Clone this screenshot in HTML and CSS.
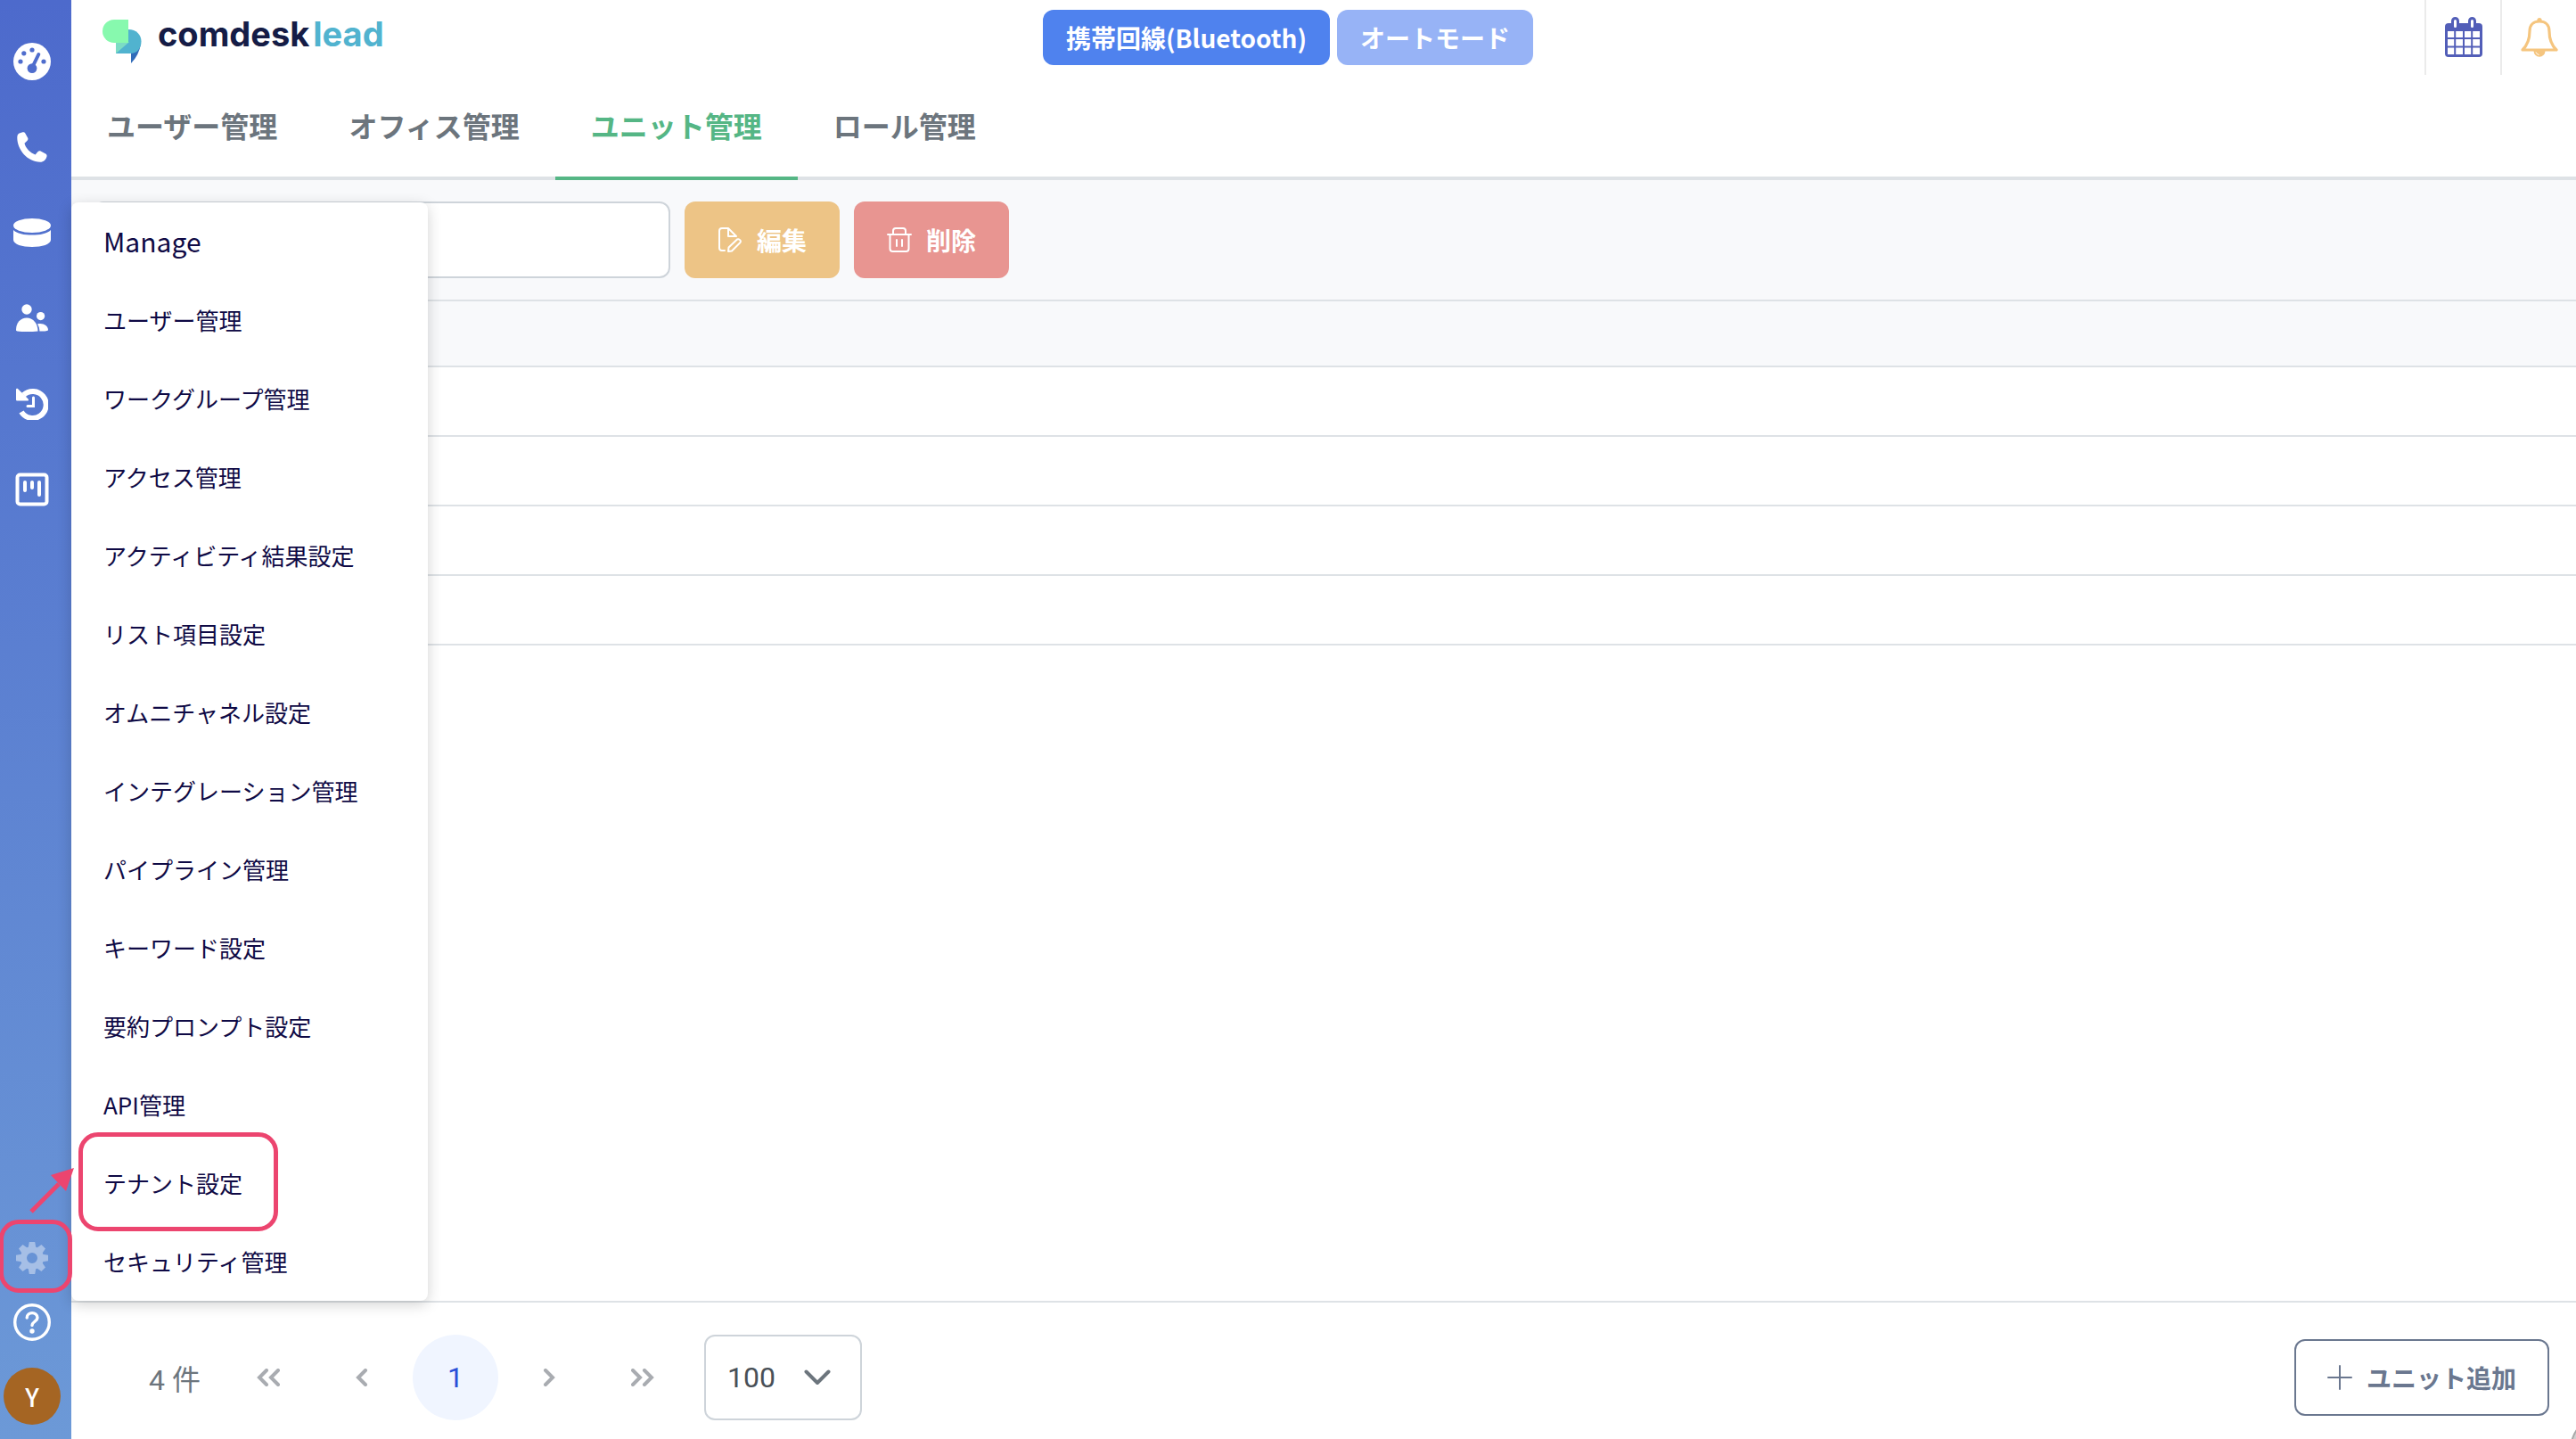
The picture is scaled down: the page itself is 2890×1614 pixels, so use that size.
FILE: index.html
```html
<!DOCTYPE html>
<html lang="ja">
<head>
  <meta charset="UTF-8">
  <meta name="viewport" content="width=device-width, initial-scale=1.0">
  <title>ユニット管理 - comdesk lead</title>
  <link rel="stylesheet" href="styles.css">
</head>
<body>
  <aside class="sidebar">
    <nav class="side-nav">
      <a href="#" class="side-link" aria-label="ダッシュボード">
        <svg width="42" height="42" viewBox="0 0 42 42">
          <circle cx="21" cy="21" r="21" fill="#fff"/>
          <g fill="#4f6dcd">
            <circle cx="8" cy="21" r="2.6"/>
            <circle cx="11.8" cy="11.8" r="2.6"/>
            <circle cx="21" cy="8" r="2.6"/>
            <circle cx="34" cy="21" r="2.6"/>
            <circle cx="21" cy="28.6" r="5.4"/>
          </g>
          <path d="M21.5 27L28.3 13" stroke="#4f6dcd" stroke-width="4" stroke-linecap="round"/>
        </svg>
      </a>
      <a href="#" class="side-link" aria-label="電話">
        <svg width="34" height="34" viewBox="0 0 34 34" fill="#fff">
          <path d="M2.6 1.5L6.4.3C7.6 0 8.8.5 9.3 1.6L12.2 6.8C12.700 7.8 12.4 8.9 11.6 9.7L8.5 12.8C9.6 17.8 15.2 24 20.6 25.4L23.6 22C24.3 21.2 25.6 21 26.6 21.5L32.2 24.4C33.3 25 33.8 26.2 33.5 27.4C32.6 31 30 33.7 26 33.7C12 33.7.3 20 .3 6.5C.3 4 1 2.2 2.6 1.5Z"/>
        </svg>
      </a>
      <a href="#" class="side-link" aria-label="データ">
        <svg width="42" height="32" viewBox="0 0 42 32" fill="#fff">
          <ellipse cx="21" cy="8" rx="21" ry="8"/>
          <path d="M0 13C4 17 12 18.600 21 18.600S38 17 42 13V24C42 29 32 32 21 32S0 29 0 24Z"/>
        </svg>
      </a>
      <a href="#" class="side-link" aria-label="顧客">
        <svg width="36" height="32" viewBox="0 0 36 32" fill="#fff">
          <circle cx="12" cy="6" r="5.700"/>
          <circle cx="27.600" cy="13.600" r="4.600"/>
          <path d="M0 29C0 21 5 15.400 12 15.400C19.500 15.400 24.500 22 24.500 30.600C17 31.300 7 31.300 1.500 30.500C.4 30.300 0 29.800 0 29Z"/>
          <path d="M24 22.500C30 20.800 36 24 36 29C36 30.400 33 30.600 26.400 30.600C26.400 27.500 25.600 25 24 22.500Z"/>
        </svg>
      </a>
      <a href="#" class="side-link" aria-label="履歴">
        <svg width="36" height="36" viewBox="0 0 36 36" fill="none">
          <path d="M8.500 8A15 15 0 1 1 6 27" stroke="#fff" stroke-width="6"/>
          <path d="M0 2C0 .8 1.400.4 2.200 1.200L13.600 12.500C14.400 13.400 14 14.600 12.800 14.600H1.500C.6 14.600 0 14 0 13.200Z" fill="#fff"/>
          <path d="M19.500 11V20.500H13" stroke="#fff" stroke-width="3" stroke-linecap="round"/>
        </svg>
      </a>
      <a href="#" class="side-link" aria-label="カンバン">
        <svg width="38" height="38" viewBox="0 0 38 38" fill="none" stroke="#fff" stroke-width="4" stroke-linecap="round">
          <rect x="2.500" y="2.500" width="33" height="33" rx="3"/>
          <path d="M11 11V20M19 11V17M27 11V25"/>
        </svg>
      </a>
    </nav>
    <div class="side-bottom">
      <button type="button" class="side-button" aria-label="設定">
        <svg width="36" height="36" viewBox="-18 -18 36 36">
          <defs><path id="tooth" d="M-3.200-18H3.200L4.600-10H-4.600Z"/></defs>
          <g fill="#a6bfe6">
            <use href="#tooth"/><use href="#tooth" transform="rotate(45)"/><use href="#tooth" transform="rotate(90)"/><use href="#tooth" transform="rotate(135)"/>
            <use href="#tooth" transform="rotate(180)"/><use href="#tooth" transform="rotate(225)"/><use href="#tooth" transform="rotate(270)"/><use href="#tooth" transform="rotate(315)"/>
          </g>
          <circle r="9.500" fill="none" stroke="#a6bfe6" stroke-width="7"/>
        </svg>
      </button>
      <button type="button" class="side-button" aria-label="ヘルプ">
        <svg width="42" height="42" viewBox="0 0 42 42" fill="none" stroke="#fff">
          <circle cx="21" cy="21" r="19.300" stroke-width="3.400"/>
          <path d="M15.200 16C15.200 8.800 27 8.800 27 16C27 20 21 20.500 21 24.500" stroke-width="3.400" stroke-linecap="round"/>
          <circle cx="21" cy="31" r="2.700" fill="#fff" stroke="none"/>
        </svg>
      </button>
      <button type="button" class="avatar">Y</button>
    </div>
  </aside>

  <div class="page">
    <header class="header">
      <a href="#" class="logo">
        <svg width="44" height="50" viewBox="0 0 44 50">
          <path d="M32 36L43 27Q41 40 32 49Z" fill="#316cb9"/>
          <path d="M15 11H29C38 11 43.500 17 43.500 24.500C43.500 32 39 38 31 38H15Z" fill="#51b3cf"/>
          <path d="M15 38V25H30Z" fill="#7cdcc4"/>
          <path d="M29 0V26H13A13 13 0 0 1 13 0Z" fill="#87f9ae"/>
        </svg>
        <span class="logo-text">comdesk<span class="logo-lead">lead</span></span>
      </a>
      <div class="modes">
        <button type="button" class="mode">携帯回線(Bluetooth)</button>
        <button type="button" class="mode mode-off">オートモード</button>
      </div>
      <div class="header-icons">
        <button type="button" class="header-icon" aria-label="カレンダー">
          <svg width="42" height="46" viewBox="0 0 42 46">
            <rect y="7" width="42" height="38" rx="4" fill="#525eb8"/>
            <rect x="8.500" y="1.500" width="6" height="12" rx="3" fill="#fff" stroke="#525eb8" stroke-width="3"/>
            <rect x="27.500" y="1.500" width="6" height="12" rx="3" fill="#fff" stroke="#525eb8" stroke-width="3"/>
            <path d="M3 16H10.200V23H3ZM12.200 16H20V23H12.200ZM22 16H29.200V23H22ZM31.200 16H39V23H31.200ZM3 25H10.200V32.500H3ZM12.200 25H20V32.500H12.200ZM22 25H29.200V32.500H22ZM31.200 25H39V32.500H31.200ZM3 34.500H10.200V42H3ZM12.200 34.500H20V42H12.200ZM22 34.500H29.200V42H22ZM31.200 34.500H39V42H31.200Z" fill="#fff"/>
          </svg>
        </button>
        <button type="button" class="header-icon" aria-label="通知">
          <svg width="42" height="46" viewBox="0 0 42 46" fill="none">
            <circle cx="21" cy="3.500" r="2.600" fill="#f5c57f"/>
            <path d="M10 16C10 9 14.500 5 21 5S32 9 32 16C32 26 34.500 31.500 40 37H2C7.500 31.500 10 26 10 16Z" stroke="#f5c57f" stroke-width="3.200" stroke-linejoin="round"/>
            <path d="M14.500 38H27.500A6.500 6.800 0 0 1 14.500 38Z" fill="#f5c57f"/>
            <path d="M17 39.500Q18 42 20.500 42.500" stroke="#fff" stroke-width="1"/>
          </svg>
        </button>
      </div>
    </header>

    <nav class="tabs">
      <a href="#" class="tab">ユーザー管理</a>
      <a href="#" class="tab">オフィス管理</a>
      <a href="#" class="tab active">ユニット管理</a>
      <a href="#" class="tab">ロール管理</a>
    </nav>

    <main class="content">
      <div class="toolbar">
        <input type="text" class="search" aria-label="検索">
        <button type="button" class="btn btn-edit">
          <svg width="28" height="28" viewBox="0 0 28 28" fill="none" stroke="#fff" stroke-width="2" stroke-linejoin="round" stroke-linecap="round">
            <path d="M8 26H5Q2 26 2 23V4Q2 1 5 1H12L21 10M12 1V10H21"/>
            <path d="M12 27L12.500 22.500L22 13.500Q24 12.500 25.500 14.500Q26.500 16 25 17.500L16 26.500Z"/>
          </svg>
          編集
        </button>
        <button type="button" class="btn btn-delete">
          <svg width="28" height="28" viewBox="0 0 28 28" fill="none" stroke="#fff" stroke-width="2" stroke-linejoin="round" stroke-linecap="round">
            <path d="M1 8H27M3.500 8V24Q3.500 27 6.500 27H21.500Q24.500 27 24.500 24V8M7 8V4Q7 1 10 1H18Q21 1 21 4V8M11 14V21M17 14V21"/>
          </svg>
          削除
        </button>
      </div>
      <table class="units">
        <thead>
          <tr><th></th></tr>
        </thead>
        <tbody>
          <tr><td></td></tr>
          <tr><td></td></tr>
          <tr><td></td></tr>
          <tr><td></td></tr>
        </tbody>
      </table>
    </main>

    <footer class="footer">
      <span class="count">4 件</span>
      <div class="pager">
        <button type="button" class="page-btn" aria-label="最初">
          <svg width="26" height="20" viewBox="0 0 26 20"><path d="M11 2L3 10L11 18M24 2L16 10L24 18"/></svg>
        </button>
        <button type="button" class="page-btn" aria-label="前へ">
          <svg width="14" height="20" viewBox="0 0 14 20"><path d="M11 2L3 10L11 18"/></svg>
        </button>
        <button type="button" class="page-btn current">1</button>
        <button type="button" class="page-btn" aria-label="次へ">
          <svg width="14" height="20" viewBox="0 0 14 20"><path d="M3 2L11 10L3 18"/></svg>
        </button>
        <button type="button" class="page-btn" aria-label="最後">
          <svg width="26" height="20" viewBox="0 0 26 20"><path d="M2 2L10 10L2 18M15 2L23 10L15 18"/></svg>
        </button>
      </div>
      <div class="rows-select">
        <select aria-label="表示件数">
          <option>100</option>
        </select>
        <svg class="chevron" width="30" height="18" viewBox="0 0 30 18"><path d="M2.500 2.500L15 15L27.500 2.500"/></svg>
      </div>
      <button type="button" class="btn btn-add">
        <svg width="28" height="28" viewBox="0 0 28 28" fill="none" stroke="#6a778f" stroke-width="2" stroke-linecap="round"><path d="M14 1V27M1 14H27"/></svg>
        ユニット追加
      </button>
    </footer>
  </div>

  <nav class="manage-menu">
    <h2 class="menu-title">Manage</h2>
    <a href="#">ユーザー管理</a>
    <a href="#">ワークグループ管理</a>
    <a href="#">アクセス管理</a>
    <a href="#">アクティビティ結果設定</a>
    <a href="#">リスト項目設定</a>
    <a href="#">オムニチャネル設定</a>
    <a href="#">インテグレーション管理</a>
    <a href="#">パイプライン管理</a>
    <a href="#">キーワード設定</a>
    <a href="#">要約プロンプト設定</a>
    <a href="#">API管理</a>
    <a href="#">テナント設定</a>
    <a href="#">セキュリティ管理</a>
  </nav>

  <!-- guide marks -->
  <div class="mark mark-gear"></div>
  <div class="mark mark-tenant"></div>
  <svg class="arrow" width="52" height="52" viewBox="0 0 52 52">
    <path d="M3 49L34 18" stroke="#ec456f" stroke-width="5"/>
    <path d="M51 0L25 8L42 26Z" fill="#ec456f"/>
  </svg>

  <div class="corner-knob"></div>
</body>
</html>
```
FILE: styles.css
```css
* {
  box-sizing: border-box;
}

body {
  margin: 0;
  height: 100vh;
  display: flex;
  position: relative;
  overflow: hidden;
  background: #fff;
  color: #6c757d;
  font-family: "Noto Sans CJK JP", sans-serif;
}

a {
  text-decoration: none;
  color: inherit;
}

button, input, select {
  font-family: inherit;
}

button {
  border: none;
  padding: 0;
  background: none;
  cursor: pointer;
}

svg {
  display: block;
  flex-shrink: 0;
}

/* sidebar */
.sidebar {
  width: 80px;
  flex-shrink: 0;
  display: flex;
  flex-direction: column;
  justify-content: space-between;
  padding: 21px 8px 16px 0;
  background: linear-gradient(#4d6acc, #6c99d7);
}

.side-nav, .side-bottom {
  display: flex;
  flex-direction: column;
  align-items: center;
}

.side-link {
  display: flex;
  align-items: center;
  justify-content: center;
  width: 72px;
  height: 96px;
}

.side-button {
  display: flex;
  align-items: center;
  justify-content: center;
  width: 72px;
  height: 72px;
}

.avatar {
  width: 64px;
  height: 64px;
  margin-top: 15px;
  border-radius: 50%;
  background: #a56523;
  color: #fff;
  font-size: 28px;
  font-weight: 500;
}

/* header */
.page {
  flex: 1;
  min-width: 0;
  display: flex;
  flex-direction: column;
}

.header {
  height: 84px;
  display: grid;
  grid-template-columns: 1fr auto 1fr;
  align-items: start;
}

.logo {
  display: flex;
  gap: 18px;
  padding: 22px 0 0 35px;
}

.logo-text {
  font-family: Inter, sans-serif;
  font-size: 38px;
  font-weight: 700;
  line-height: 32px;
  color: #151c46;
}

.logo-lead {
  margin-left: 4px;
  color: #51b3cf;
}

.modes {
  display: flex;
  gap: 8px;
  padding-top: 11px;
  margin-right: 80px;
}

.mode {
  height: 62px;
  padding: 0 26px;
  border-radius: 12px;
  background: #4f82ee;
  color: #fff;
  font-size: 28px;
  font-weight: 700;
}

.mode-off {
  background: #97b3f6;
}

.header-icons {
  display: flex;
  justify-content: flex-end;
}

.header-icon {
  display: flex;
  align-items: center;
  justify-content: center;
  width: 85px;
  height: 84px;
  border-left: 2px solid #ebebeb;
}

/* tabs */
.tabs {
  display: flex;
  height: 118px;
  background: linear-gradient(#dee2e6, #dee2e6) bottom / 100% 4px no-repeat;
}

.tab {
  display: flex;
  align-items: center;
  padding: 0 40px 2px;
  border-bottom: 4px solid transparent;
  font-size: 32px;
  font-weight: 700;
}

.tab.active {
  border-bottom-color: #55b685;
  color: #55b685;
}

/* content */
.content {
  flex: 1;
}

.toolbar {
  display: flex;
  gap: 16px;
  padding: 24px;
  background: #f8f9fb;
}

.search {
  width: 648px;
  height: 86px;
  padding: 0 24px;
  border: 2px solid #ced4da;
  border-radius: 12px;
  background: #fff;
  font-size: 28px;
}

.btn {
  display: flex;
  align-items: center;
  justify-content: center;
  gap: 16px;
  height: 86px;
  padding: 0 37px;
  border-radius: 12px;
  color: #fff;
  font-size: 28px;
  font-weight: 700;
}

.btn-edit {
  background: #edc486;
}

.btn-delete {
  background: #e89591;
}

.units {
  width: 100%;
  border-collapse: collapse;
  border-top: 2px solid #dee2e6;
}

.units th {
  height: 74px;
  background: #f8f9fb;
  border-bottom: 2px solid #dee2e6;
}

.units td {
  height: 78px;
  border-bottom: 2px solid #dee2e6;
}

/* footer */
.footer {
  display: flex;
  align-items: center;
  height: 155px;
  padding: 14px 30px 0 87px;
  border-top: 2px solid #dee2e6;
  font-size: 32px;
}

.count {
  font-family: Roboto, "Noto Sans CJK JP", sans-serif;
}

.pager {
  display: flex;
  gap: 9px;
  margin: 0 21px 0 28px;
}

.page-btn {
  display: flex;
  align-items: center;
  justify-content: center;
  width: 96px;
  height: 96px;
  border-radius: 50%;
  font-family: Roboto, sans-serif;
  font-size: 32px;
}

.page-btn path {
  fill: none;
  stroke: #a9acb1;
  stroke-width: 4;
  stroke-linecap: round;
}

.page-btn.current {
  background: #f0f5ff;
  color: #2a4fd8;
}

.rows-select {
  position: relative;
}

.rows-select select {
  appearance: none;
  width: 177px;
  height: 96px;
  padding: 0 24px;
  border: 2px solid #ced4da;
  border-radius: 12px;
  background: #fff;
  color: #495057;
  font-family: Roboto, sans-serif;
  font-size: 32px;
}

.chevron {
  position: absolute;
  right: 35px;
  top: 39px;
  pointer-events: none;
}

.chevron path {
  fill: none;
  stroke: #6c757d;
  stroke-width: 4;
  stroke-linecap: round;
  stroke-linejoin: round;
}

.btn-add {
  margin-left: auto;
  padding: 0 35px;
  border: 2px solid #6a778f;
  color: #6a778f;
}

/* manage menu */
.manage-menu {
  position: absolute;
  left: 80px;
  bottom: 155px;
  width: 400px;
  display: flex;
  flex-direction: column;
  border-radius: 8px;
  background: #fff;
  box-shadow: 0 4px 16px rgba(0, 0, 0, 0.18);
  color: #0f0a45;
}

.menu-title, .manage-menu a {
  display: flex;
  align-items: center;
  height: 88px;
  margin: 0;
  padding: 0 0 2px 36px;
  font-size: 26px;
  font-weight: 400;
}

.menu-title {
  font-size: 30px;
}

/* guide marks */
.mark {
  position: absolute;
  border: 5px solid #ec456f;
  border-radius: 22px;
  pointer-events: none;
}

.mark-gear {
  left: -1px;
  bottom: 164px;
  width: 82px;
  height: 82px;
}

.mark-tenant {
  left: 88px;
  bottom: 233px;
  width: 224px;
  height: 111px;
}

.arrow {
  position: absolute;
  left: 32px;
  bottom: 252px;
  pointer-events: none;
}

.corner-knob {
  position: absolute;
  right: -73px;
  bottom: -52px;
  width: 80px;
  height: 80px;
  border: 2px solid #a8a8a8;
  border-radius: 50%;
  background: #d0d0d0;
}
```
